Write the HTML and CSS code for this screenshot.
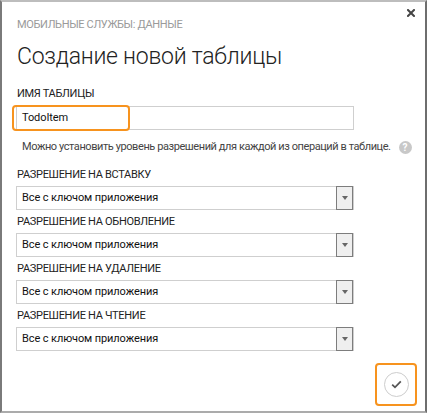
FILE: index.html
```html
<!DOCTYPE html>
<html lang="ru">
<head>
<meta charset="utf-8">
<link rel="stylesheet" href="styles.css">
</head>
<body>
<div class="dialog">
  <button class="close" aria-label="Закрыть">
    <svg width="8" height="8" viewBox="0 0 8 8"><path d="M1 1 L7 7 M7 1 L1 7" stroke="#444" stroke-width="2" stroke-linecap="square"/></svg>
  </button>
  <div class="crumb">МОБИЛЬНЫЕ СЛУЖБЫ: ДАННЫЕ</div>
  <h1 class="title">Создание новой таблицы</h1>

  <div class="label first">ИМЯ ТАБЛИЦЫ</div>
  <div class="input-wrap">
    <div class="input">TodoItem</div>
    <div class="highlight"></div>
  </div>

  <div class="hint">
    <span>Можно установить уровень разрешений для каждой из операций в таблице.</span>
    <span class="help">?</span>
  </div>

  <div class="label">РАЗРЕШЕНИЕ НА ВСТАВКУ</div>
  <div class="select"><span class="value">Все с ключом приложения</span><span class="arrow"></span></div>

  <div class="label">РАЗРЕШЕНИЕ НА ОБНОВЛЕНИЕ</div>
  <div class="select"><span class="value">Все с ключом приложения</span><span class="arrow"></span></div>

  <div class="label">РАЗРЕШЕНИЕ НА УДАЛЕНИЕ</div>
  <div class="select"><span class="value">Все с ключом приложения</span><span class="arrow"></span></div>

  <div class="label">РАЗРЕШЕНИЕ НА ЧТЕНИЕ</div>
  <div class="select"><span class="value">Все с ключом приложения</span><span class="arrow"></span></div>

  <div class="footer">
    <div class="ok-frame">
      <span class="ok">
        <svg width="11" height="9" viewBox="0 0 11 9"><path d="M1.2 4.6 L4 7.3 L9.8 1.4" fill="none" stroke="#555" stroke-width="1.8"/></svg>
      </span>
    </div>
  </div>
</div>
</body>
</html>
```

FILE: styles.css
```css
* { box-sizing: border-box; }
html, body { margin: 0; padding: 0; background: #fff; }
body {
  font-family: Roboto, "Noto Sans", sans-serif;
  color: #222;
}
.dialog {
  position: relative;
  width: 427px;
  height: 413px;
  border-left: 2px solid #7a7a7a;
  border-right: 2px solid #6e6e6e;
  border-top: 2px solid #bdbdbd;
  border-bottom: 2px solid #ababab;
  padding: 16px 0 0 15px;
  background: #fff;
}
.close {
  position: absolute;
  top: 5px;
  right: 8px;
  width: 12px;
  height: 12px;
  padding: 0;
  border: 0;
  background: none;
  display: flex;
  align-items: center;
  justify-content: center;
}
.crumb {
  font-size: 11px;
  line-height: 14px;
  color: #9a9a9a;
  letter-spacing: -0.35px;
}
.title {
  margin: 10px 0 0 0;
  font-size: 23px;
  font-weight: 300;
  line-height: 30px;
  color: #222;
  letter-spacing: -0.25px;
}
.label {
  font-size: 11px;
  line-height: 14px;
  color: #222;
  margin-top: 5px;
  letter-spacing: -0.3px;
}
.label.first { margin-top: 15px; }
.input-wrap {
  position: relative;
  width: 338px;
  margin-top: 5px;
  margin-left: -1px;
}
.input {
  height: 24px;
  border: 1px solid #cfcfcf;
  padding: 0 5px;
  font-size: 11px;
  line-height: 22px;
  color: #111;
  letter-spacing: -0.1px;
}
.highlight {
  position: absolute;
  left: -4px;
  top: -1px;
  width: 118px;
  height: 26px;
  border: 2.5px solid #f7931e;
  border-radius: 4px;
}
.hint {
  display: flex;
  align-items: center;
  gap: 8px;
  margin-top: 10px;
  margin-left: 5px;
  font-size: 11px;
  line-height: 14px;
  color: #444;
  white-space: nowrap;
  letter-spacing: -0.42px;
}
.help {
  width: 13px;
  height: 13px;
  border-radius: 50%;
  background: #c8c8c8;
  color: #fff;
  font-size: 10px;
  font-weight: 700;
  line-height: 13px;
  text-align: center;
  letter-spacing: 0;
}
.hint + .label { margin-top: 14px; }
.select {
  display: flex;
  align-items: stretch;
  width: 338px;
  height: 24px;
  margin-top: 4px;
  margin-left: -1px;
  border: 1px solid #cfcfcf;
}
.value {
  flex: 1;
  padding-left: 5px;
  font-size: 11px;
  line-height: 22px;
  color: #111;
  letter-spacing: -0.1px;
}
.arrow {
  width: 17px;
  border: 1px solid #7d7d7d;
  background: #efefef;
  margin: -1px 0 -1px 0;
  display: flex;
  align-items: center;
  justify-content: center;
}
.arrow::after {
  content: "";
  border-left: 3.5px solid transparent;
  border-right: 3.5px solid transparent;
  border-top: 4px solid #666;
}
.footer {
  display: flex;
  justify-content: flex-end;
  margin-top: 12px;
  padding-right: 8px;
}
.ok-frame {
  width: 42px;
  height: 43px;
  border: 2.5px solid #f7931e;
  border-radius: 4px;
  display: flex;
  align-items: center;
  justify-content: center;
}
.ok {
  width: 25px;
  height: 25px;
  border-radius: 50%;
  border: 1.5px solid #cdcdcd;
  display: flex;
  align-items: center;
  justify-content: center;
}
```
